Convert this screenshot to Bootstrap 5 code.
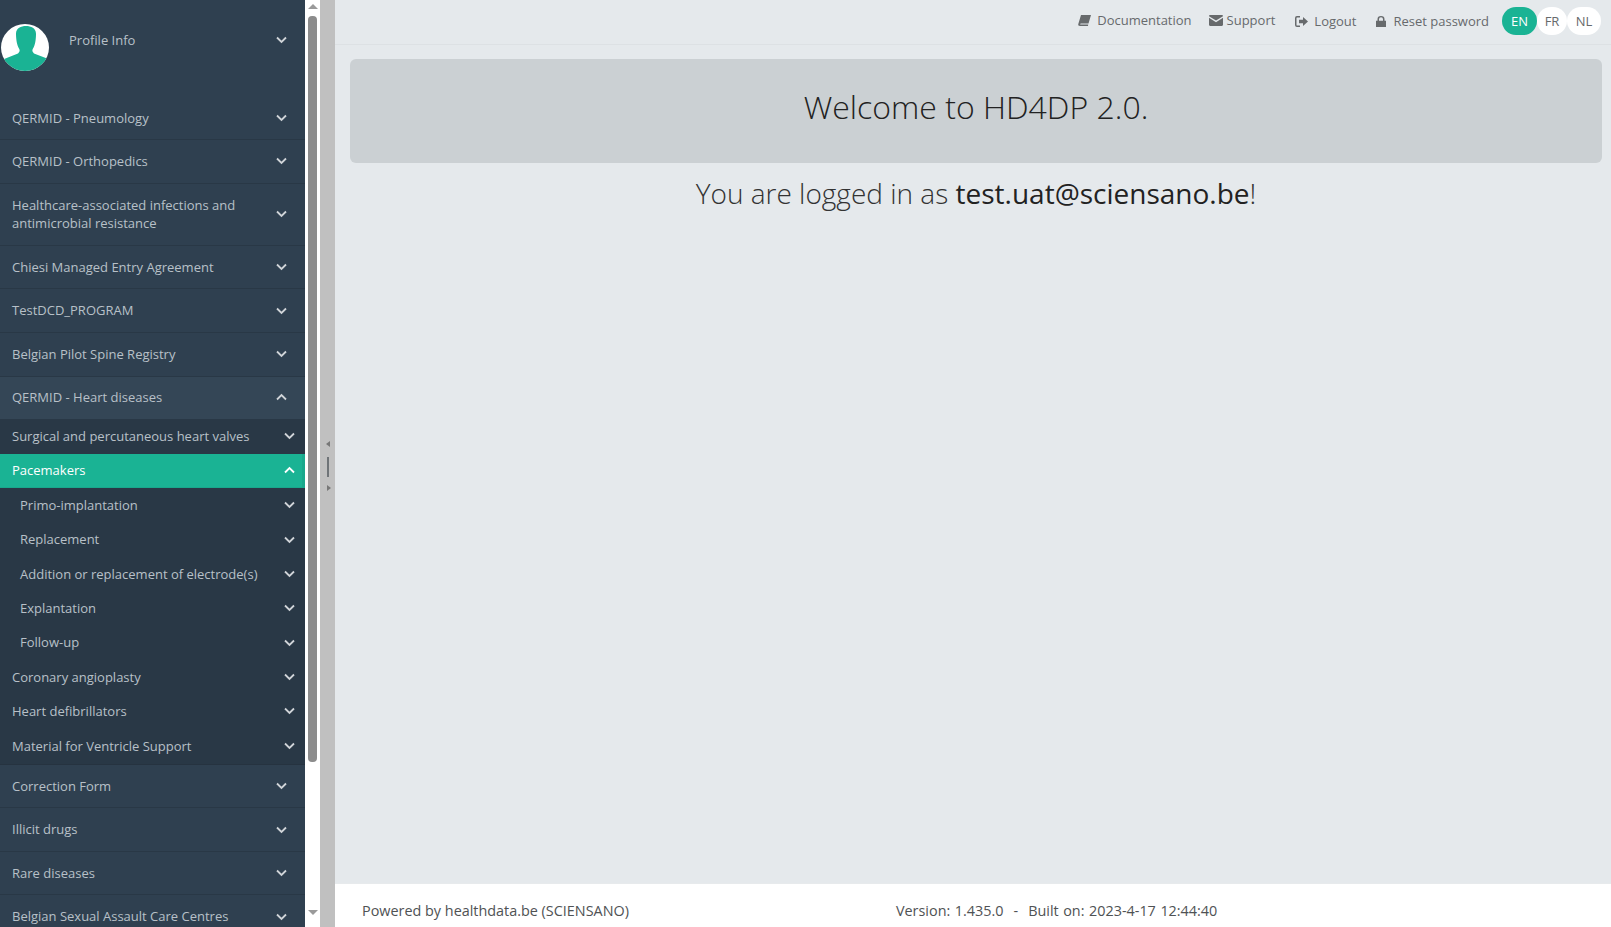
<!DOCTYPE html>
<html lang="en"><head><meta charset="utf-8"><title>HD4DP 2.0</title>
<link href="https://cdn.jsdelivr.net/npm/bootstrap@5.3.0/dist/css/bootstrap.min.css" rel="stylesheet">
<style>
html,body{height:100%;overflow:hidden}
body{font-family:"Open Sans",sans-serif;font-size:13px;line-height:1.42857;color:#676a6c;background:#e7eaec}
.shell{height:927px}
.side{width:305px;height:927px;overflow:hidden;background:#2f4050;flex:none}
.prof{height:96.6px;padding:24px 18px 0 1px}
.ava{width:48px;height:47px;flex:none}
.prof-t{margin:7px auto 0 20px;color:#b8c0c8}
.prof-c{margin-top:12px}
.mi{display:flex;align-items:center;justify-content:space-between;color:#b8c0c8;text-decoration:none}
.top{padding:12px 18px 12px 12px;border-bottom:1px solid #293846}
.open{background:#344656;border-bottom:0;padding:11.5px 18px 12.6px 12px}
.subs{background:#293846;border-bottom:1px solid #263340;padding-bottom:.6px}
.s1{padding:7.7px 10px 7.8px 12px;height:34.4px}
.s2{padding:7.7px 10px 7.8px 20px;height:34.4px}
.act{background:#1ab394;color:#fff;border-right:3px solid #19a88c;border-bottom:1px solid #19a88c;padding-right:7px}
.chev{width:11px;height:8px;flex:none;stroke:#d0d4d8;fill:none;stroke-width:1.8}
.act .chev{stroke:#fff}
.sbar{width:15px;height:927px;background:#fff;flex:none;padding-top:4px}
.arr{width:0;height:0;border-left:5px solid transparent;border-right:5px solid transparent;margin:0 auto}
.arr-u{border-bottom:5px solid #9a9a9a}
.arr-d{border-top:5px solid #9a9a9a;margin-top:148px}
.thumb{width:9px;height:746px;margin:7px 0 0 3px;background:#8c8c8c;border-radius:4px}
.split{width:15px;height:927px;background:#c0c0c0;flex:none;padding-top:441px}
.tri-l{width:0;height:0;border-top:3px solid transparent;border-bottom:3px solid transparent;border-right:4px solid #777;margin-left:6px}
.grip{width:2px;height:20px;background:#6f7478;margin:10px 0 8px 7px}
.tri-r{width:0;height:0;border-top:3px solid transparent;border-bottom:3px solid transparent;border-left:4px solid #777;margin-left:7px}
.main{min-width:0;background:#e5e9ec;height:927px}
.tbar{height:45px;border-bottom:1px solid #dde1e4;padding:0 10px 2px 0}
.tlink{color:#676a6c;text-decoration:none;display:flex;align-items:center;gap:6px;margin-right:17px}
.tlink svg{fill:#676a6c;flex:none}
.up{margin-top:-1px}
.t-sup{gap:4px;margin-right:20px}
.t-lock{gap:7px;margin-right:13px}
.t-log{gap:6px;margin-right:20px}
.pill{display:block;height:28px;line-height:28px;text-align:center;border-radius:14px;background:#fff;color:#676a6c;text-decoration:none}
.pill-on{width:35px;background:#1ab394;color:#fff}
.pill-fr{width:30px}.pill-nl{width:34px}
.hero{margin:14px 9px 0 15px;height:104px;background:#cbd0d3;border-radius:6px;font-size:32px;font-weight:300;color:#222;line-height:95px;text-align:center}
.logged{margin:11px 9px 0 15px;font-size:28px;font-weight:300;color:#333;text-align:center;line-height:38px}
.logged b{font-weight:400;color:#222}
.foot{height:44px;background:#fff;border-top:1px solid #e7eaec;font-size:14.4px;color:#4f5254;padding:17px 0 0 27px}
.foot-v{margin-left:267px;word-spacing:.8px}
.sp{margin:0 10px}
</style></head><body>
<svg width="0" height="0" class="position-absolute"><symbol id="cd" viewBox="0 0 11 8"><path d="M1 1.500l4.500 4.500L10 1.500"/></symbol><symbol id="cu" viewBox="0 0 11 8"><path d="M1 6.500L5.500 2 10 6.500"/></symbol></svg>
<div class="d-flex shell">
<nav class="side">
 <div class="prof d-flex align-items-start">
  <svg class="ava" viewBox="0 0 48 48" preserveAspectRatio="none"><defs><clipPath id="cc"><circle cx="24" cy="24" r="24"/></clipPath></defs><circle cx="24" cy="24" r="24" fill="#fff"/><g clip-path="url(#cc)" fill="#1ab394"><path d="M15 10C15 4 20 2 25 2S35 4 35 10C35 16 34 22 32 25C31 27 31 28 33 30L48 36V48H0V37L17 30C19 28 19 27 18 25C16 22 15 16 15 10Z"/></g></svg>
  <span class="prof-t">Profile Info</span>
  <svg class="chev prof-c"><use href="#cd"/></svg>
 </div>
 <a class="mi top" href="#"><span>QERMID - Pneumology</span><svg class="chev"><use href="#cd"/></svg></a>
 <a class="mi top" href="#"><span>QERMID - Orthopedics</span><svg class="chev"><use href="#cd"/></svg></a>
 <a class="mi top" href="#"><span>Healthcare-associated infections and<br>antimicrobial resistance</span><svg class="chev"><use href="#cd"/></svg></a>
 <a class="mi top" href="#"><span>Chiesi Managed Entry Agreement</span><svg class="chev"><use href="#cd"/></svg></a>
 <a class="mi top" href="#"><span>TestDCD_PROGRAM</span><svg class="chev"><use href="#cd"/></svg></a>
 <a class="mi top" href="#"><span>Belgian Pilot Spine Registry</span><svg class="chev"><use href="#cd"/></svg></a>
 <a class="mi open" href="#"><span>QERMID - Heart diseases</span><svg class="chev"><use href="#cu"/></svg></a>
 <div class="subs">
  <a class="mi s1" href="#"><span>Surgical and percutaneous heart valves</span><svg class="chev"><use href="#cd"/></svg></a>
  <a class="mi s1 act" href="#"><span>Pacemakers</span><svg class="chev"><use href="#cu"/></svg></a>
  <a class="mi s2" href="#"><span>Primo-implantation</span><svg class="chev"><use href="#cd"/></svg></a>
  <a class="mi s2" href="#"><span>Replacement</span><svg class="chev"><use href="#cd"/></svg></a>
  <a class="mi s2" href="#"><span>Addition or replacement of electrode(s)</span><svg class="chev"><use href="#cd"/></svg></a>
  <a class="mi s2" href="#"><span>Explantation</span><svg class="chev"><use href="#cd"/></svg></a>
  <a class="mi s2" href="#"><span>Follow-up</span><svg class="chev"><use href="#cd"/></svg></a>
  <a class="mi s1" href="#"><span>Coronary angioplasty</span><svg class="chev"><use href="#cd"/></svg></a>
  <a class="mi s1" href="#"><span>Heart defibrillators</span><svg class="chev"><use href="#cd"/></svg></a>
  <a class="mi s1" href="#"><span>Material for Ventricle Support</span><svg class="chev"><use href="#cd"/></svg></a>
 </div>
 <a class="mi top" href="#"><span>Correction Form</span><svg class="chev"><use href="#cd"/></svg></a>
 <a class="mi top" href="#"><span>Illicit drugs</span><svg class="chev"><use href="#cd"/></svg></a>
 <a class="mi top" href="#"><span>Rare diseases</span><svg class="chev"><use href="#cd"/></svg></a>
 <a class="mi top" href="#"><span>Belgian Sexual Assault Care Centres</span><svg class="chev"><use href="#cd"/></svg></a>
</nav>
<div class="sbar"><div class="arr arr-u"></div><div class="thumb"></div><div class="arr arr-d"></div></div>
<div class="split"><div class="tri-l"></div><div class="grip"></div><div class="tri-r"></div></div>
<main class="main flex-grow-1 d-flex flex-column">
 <div class="tbar d-flex align-items-center justify-content-end">
  <a class="tlink up" href="#"><svg width="13" height="11" viewBox="0 0 13 11"><path d="M3 0H13L10.500 8.500H3C2 8.500 1.800 9.600 3 9.600H10.200L10 11H2C.5 11 0 10 .3 9Z"/></svg>Documentation</a>
  <a class="tlink up t-sup" href="#"><svg width="14" height="11" viewBox="0 0 14 11"><path d="M0 1.200C0 .5.5 0 1.200 0h11.600c.7 0 1.200.5 1.200 1.200L7 5.600zM0 2.800V9.800c0 .7.5 1.200 1.200 1.200h11.600c.7 0 1.200-.5 1.200-1.200V2.800L7 7.200z"/></svg>Support</a>
  <a class="tlink t-log" href="#"><svg width="13" height="11" viewBox="0 0 13 11"><path d="M5 0v1.500H2A.5.5 0 0 0 1.500 2v7a.5.5 0 0 0 .5.5h3V11H2a2 2 0 0 1-2-2V2a2 2 0 0 1 2-2zM8 1l5 4.500L8 10V7.300H4V3.700h4z"/></svg>Logout</a>
  <a class="tlink t-lock" href="#"><svg width="10" height="11" viewBox="0 0 10 11"><path d="M0 4.800h1.500V3.300a3.500 3.300 0 0 1 7 0v1.500H10V11H0zM3 4.800h4V3.300a2 2 0 0 0-4 0z"/></svg>Reset password</a>
  <div class="d-flex">
   <a class="pill pill-on" href="#">EN</a><a class="pill pill-fr" href="#">FR</a><a class="pill pill-nl" href="#">NL</a>
  </div>
 </div>
 <div class="hero">Welcome to HD4DP 2.0.</div>
 <div class="logged">You are logged in as <b>test.uat@sciensano.be</b>!</div>
 <div class="mt-auto foot d-flex"><span>Powered by healthdata.be (SCIENSANO)</span><span class="foot-v">Version: 1.435.0<span class="sp">-</span>Built on: 2023-4-17 12:44:40</span></div>
</main>
</div>
</body></html>
